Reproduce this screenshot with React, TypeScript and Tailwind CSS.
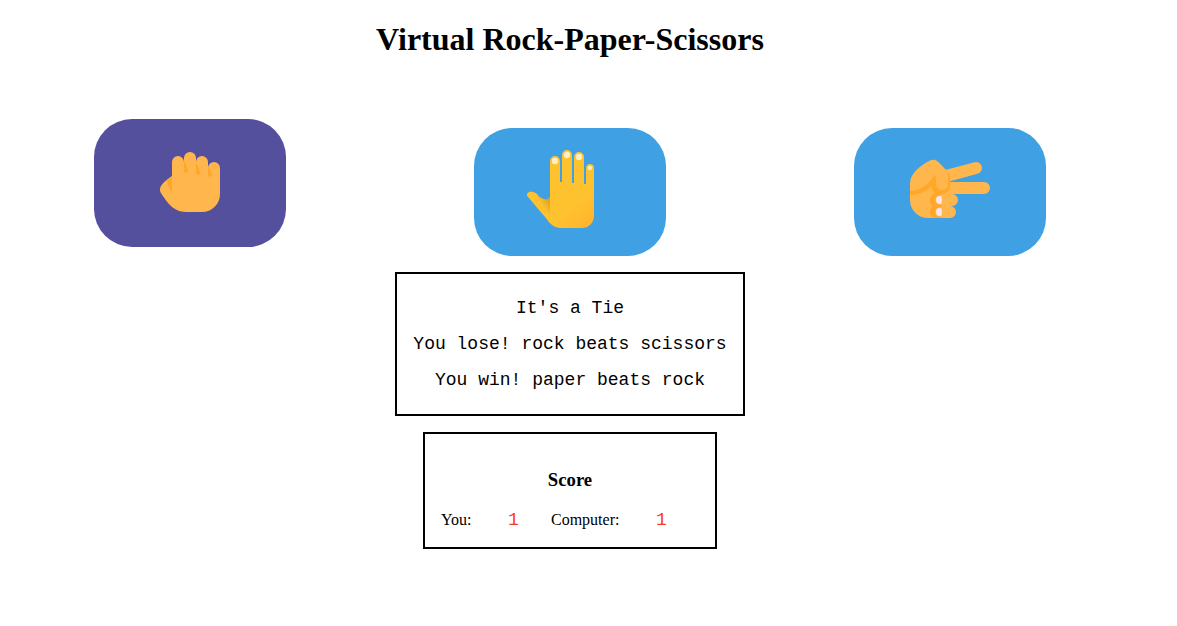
import { useState } from "react";

function RockIcon() {
  return (
    <svg viewBox="0 0 48 48" className="size-24" aria-hidden="true">
      <path
        fill="#FFB74D"
        d="M15 20.5V13.5a3 3 0 0 1 6 0V11.5a3 3 0 0 1 6 0v2a3 3 0 0 1 6 0v3a3 3 0 0 1 6 0V29.5a9 9 0 0 1-9 9H22C15.5 38.5 12.500 33.500 9.600 29.300C8.600 27.700 8.800 26.100 10 24.700C11.500 23 13 21.800 15 20.500Z"
      />
      <path fill="#FFA726" d="M13 22.300L15 20.500V29.500L12.400 23.200Z" />
      <path fill="#FFA726" d="M21 12.500L22.900 17.200a1 1 0 0 1-1.900 1.100Z" />
      <path fill="#FFA726" d="M27 13.500L28.900 18.200a1 1 0 0 1-1.900 1.100Z" />
      <path fill="#FFA726" d="M33 15.500L34.900 19.200a1 1 0 0 1-1.900 1.100Z" />
    </svg>
  );
}

function PaperIcon() {
  return (
    <svg viewBox="0 0 48 48" className="size-24" aria-hidden="true">
      <defs>
        <linearGradient id="palm" x1="20" y1="22" x2="36" y2="42" gradientUnits="userSpaceOnUse">
          <stop offset="0.4" stopColor="#FFC22F" />
          <stop offset="1" stopColor="#FFB22E" />
        </linearGradient>
        <linearGradient id="thumb" x1="9.500" y1="31.500" x2="15" y2="28" gradientUnits="userSpaceOnUse">
          <stop offset="0.1" stopColor="#FFC22F" />
          <stop offset="1" stopColor="#D49A20" />
        </linearGradient>
      </defs>
      <path
        fill="url(#thumb)"
        d="M14 39.500L13 38.300L2.800 26.200C2 25.100 2.800 23.900 4.500 23.900C6.500 23.800 7.900 24.900 8.500 26.300C8.800 27 9.400 26.700 10 27C11.700 28.300 13.300 27.800 14 26Z"
      />
      <path
        fill="url(#palm)"
        d="M14 8.500a2.500 2.500 0 0 1 5 0V19h1V5.500a2.500 2.500 0 0 1 5 0V19.500h1V6.500a2.500 2.500 0 0 1 5 0V20h1V12a2 2 0 0 1 4 0V36a6 6 0 0 1-6 6H19C16.500 42 14.500 40.300 13 38.400L14 36Z"
      />
      <g fill="#FFEFC2">
        <circle cx="16.500" cy="8.500" r="1.600" />
        <circle cx="22.500" cy="5.500" r="1.600" />
        <circle cx="28.500" cy="6.500" r="1.600" />
        <circle cx="34" cy="12" r="1.100" />
      </g>
    </svg>
  );
}

function ScissorsIcon() {
  return (
    <svg viewBox="0 0 48 48" className="size-24" aria-hidden="true">
      <path d="M21 16.300L37 12" stroke="#FFB74D" strokeWidth="6" strokeLinecap="round" />
      <path
        fill="#FFB74D"
        d="M4 19.700C4 15 9 10.700 13.800 8.400C15.200 7.600 16.700 7.700 17.900 8.800L22.300 13.300L24 19H41a3 3 0 0 1 0 6H25a3 3 0 0 1 0 6H24a3 3 0 0 1 0 6H13a9 9 0 0 1-9-9Z"
      />
      <path
        fill="#FFA726"
        d="M4 23.500C9 23.500 13.200 20.500 16.200 15.800L17 16V20a3 3 0 0 0 6 0V14.300C23.700 14.800 24 15.800 24 17V21a4 4 0 0 1-4 4H18.500C16 25 14.900 23.200 14.900 20.700C12.300 23.700 8.300 25.400 4 25.500Z"
      />
      <path
        fill="#FFA726"
        d="M20 24.500H16.700C14.900 25.100 14 26.500 14 28C14 29.400 14.500 30.400 15.300 31C14.500 31.700 14 32.700 14 34C14 35.400 14.600 36.500 15.500 37H20Z"
      />
      <path fill="#FFB74D" d="M20 25.500v5h-1a2.500 2.500 0 0 1 0-5Z" />
      <path fill="#FFB74D" d="M20 31.500v5h-1a2.500 2.500 0 0 1 0-5Z" />
      <path fill="#FCE4EC" d="M19.500 26C20.200 26.700 20.200 29.300 19.500 30H19a2 2 0 0 1 0-4Z" />
      <path fill="#FCE4EC" d="M19.500 32C20.200 32.700 20.200 35.300 19.500 36H19a2 2 0 0 1 0-4Z" />
    </svg>
  );
}

const choices = [
  { name: "rock", Icon: RockIcon },
  { name: "paper", Icon: PaperIcon },
  { name: "scissors", Icon: ScissorsIcon },
];

const messages = ["It's a Tie", "You lose! rock beats scissors", "You win! paper beats rock"];

export default function App() {
  const [active, setActive] = useState("rock");

  return (
    <main className="flex h-[626px] w-[1140px] flex-col items-center bg-white font-['Liberation_Serif',serif] text-black">
      <h1 className="mt-[21px] text-[32px] leading-[37px] font-bold">Virtual Rock-Paper-Scissors</h1>
      <div className="mt-[61px] grid h-[137px] w-full grid-cols-3 justify-items-center">
        {choices.map(({ name, Icon }) => (
          <button
            key={name}
            aria-label={name}
            onClick={() => setActive(name)}
            className={
              active === name
                ? "flex h-32 w-48 items-center justify-center rounded-[38px] bg-[#55509d]"
                : "mt-[9px] flex h-32 w-48 items-center justify-center rounded-[38px] bg-[#3fa0e4]"
            }
          >
            <Icon />
          </button>
        ))}
      </div>
      <section className="mt-4 flex h-36 w-[350px] flex-col items-center justify-center border-2 border-black font-['Liberation_Mono',monospace] text-lg leading-9">
        {messages.map((message) => (
          <p key={message}>{message}</p>
        ))}
      </section>
      <section className="mt-4 h-[117px] w-[294px] border-2 border-black px-4 pt-[35px]">
        <h3 className="text-center text-[18.72px] leading-[22px] font-bold">Score</h3>
        <div className="mt-[19px] flex items-center text-base leading-5">
          <span className="w-[67px]">You:</span>
          <span className="w-[43px] font-['Liberation_Mono',monospace] text-lg leading-5 text-[#f83a22]">1</span>
          <span className="w-[105px]">Computer:</span>
          <span className="font-['Liberation_Mono',monospace] text-lg leading-5 text-[#f83a22]">1</span>
        </div>
      </section>
    </main>
  );
}
